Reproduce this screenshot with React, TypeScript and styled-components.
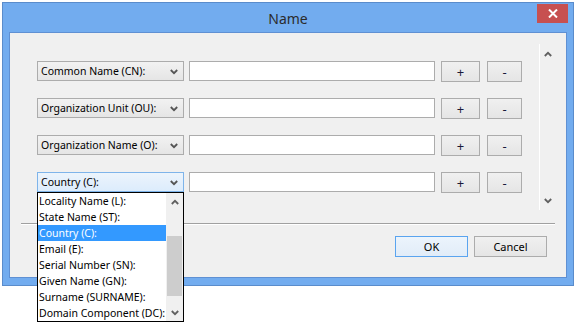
import React from 'react'
import styled, { createGlobalStyle } from 'styled-components'

const GlobalStyle = createGlobalStyle`
  html, body {
    margin: 0;
    padding: 0;
    background: #ffffff;
  }
  body {
    font-family: "Noto Sans", "Liberation Sans", sans-serif;
    font-size: 10.5px;
    color: #000;
  }
`

const Desktop = styled.div`
  width: 577px;
  height: 329px;
  overflow: hidden;
  background: #ffffff;
  padding: 2px 0 0 2px;
  box-sizing: border-box;
`

const Window = styled.div`
  width: 572px;
  height: 284px;
  box-sizing: border-box;
  border: 1px solid #5a8ccb;
  background: #72acef;
  padding: 0 6px 7px 6px;
  display: flex;
  flex-direction: column;
`

const TitleBar = styled.div`
  position: relative;
  height: 29px;
  display: flex;
  align-items: center;
  justify-content: center;
`

const Title = styled.span`
  font-size: 14px;
  color: #2b2b2b;
  padding-top: 1px;
`

const CloseButton = styled.div`
  position: absolute;
  right: -1px;
  top: 1px;
  width: 31px;
  height: 19px;
  background: #c75050;
  display: flex;
  align-items: center;
  justify-content: center;
`

const Client = styled.div`
  flex: 1;
  background: #f0f0f0;
  border: 1px solid #5f90d3;
  display: flex;
  flex-direction: column;
`

const ScrollPane = styled.div`
  margin: 11px 10px 0 0;
  height: 166px;
  display: flex;
`

const Rows = styled.div`
  flex: 1;
  padding: 17px 0 0 27px;
  display: flex;
  flex-direction: column;
  gap: 17px;
`

const Row = styled.div`
  position: relative;
  display: flex;
  align-items: flex-start;
  height: 20px;
`

const Combo = styled.div<{ $open?: boolean }>`
  position: relative;
  width: 147px;
  height: 20px;
  box-sizing: border-box;
  border: 1px solid ${p => (p.$open ? '#7eb4ea' : '#acacac')};
  background: ${p =>
    p.$open
      ? 'linear-gradient(#ecf4fc, #dcecfc)'
      : 'linear-gradient(#f2f2f2, #e5e5e5)'};
  display: flex;
  align-items: center;
  padding-left: 3px;
  white-space: nowrap;
`

const ComboLabel = styled.span`
  flex: 1;
`

const ComboArrow = styled.span`
  width: 18px;
  display: flex;
  justify-content: center;
  padding-top: 2px;
`

const TextInput = styled.div`
  margin-left: 5px;
  width: 246px;
  height: 20px;
  box-sizing: border-box;
  border: 1px solid #acacac;
  background: #ffffff;
`

const SmallButton = styled.div<{ $w: number; $gap: number }>`
  margin-left: ${p => p.$gap}px;
  width: ${p => p.$w}px;
  height: 21px;
  box-sizing: border-box;
  border: 1px solid #acacac;
  background: linear-gradient(#f0f0f0, #e5e5e5);
  display: flex;
  align-items: center;
  justify-content: center;
  font-size: 13px;
  color: #1a1a3a;
`

const ScrollColumn = styled.div`
  width: 17px;
  border-left: 1px solid #ffffff;
  display: flex;
  flex-direction: column;
  justify-content: space-between;
  align-items: center;
  padding: 7px 0 6px 0;
  box-sizing: border-box;
`

const Separator = styled.div`
  margin: 13px 11px 0 11px;
  height: 1px;
  background: #a0a0a0;
  border-bottom: 1px solid #ffffff;
`

const Footer = styled.div`
  display: flex;
  justify-content: flex-end;
  gap: 6px;
  padding: 11px 19px 0 0;
`

const DialogButton = styled.div<{ $default?: boolean }>`
  width: 73px;
  height: 21px;
  box-sizing: border-box;
  border: 1px solid ${p => (p.$default ? '#5aa4ef' : '#acacac')};
  background: ${p =>
    p.$default ? 'linear-gradient(#ecf4fc, #e1ecf8)' : 'linear-gradient(#f0f0f0, #e5e5e5)'};
  display: flex;
  align-items: center;
  justify-content: center;
  font-size: 11px;
`

// the open combo's popup list, hanging below the combo over the dialog edge
const DropList = styled.div`
  position: absolute;
  left: -1px;
  top: 19px;
  width: 147px;
  height: 130px;
  box-sizing: border-box;
  border: 1px solid #000000;
  background: #ffffff;
  display: flex;
  z-index: 10;
`

const ListItems = styled.div`
  flex: 1;
  display: flex;
  flex-direction: column;
`

const ListItem = styled.div<{ $selected?: boolean }>`
  height: 16px;
  line-height: 16px;
  padding-left: 1px;
  white-space: nowrap;
  overflow: hidden;
  background: ${p => (p.$selected ? '#3399ff' : 'transparent')};
  color: ${p => (p.$selected ? '#ffffff' : '#000000')};
`

const ListScroll = styled.div`
  width: 17px;
  background: #f0f0f0;
  display: flex;
  flex-direction: column;
  align-items: center;
`

const ArrowCell = styled.div`
  height: 17px;
  display: flex;
  align-items: center;
  justify-content: center;
`

const ThumbTrack = styled.div`
  flex: 1;
  width: 100%;
  padding: 26px 1px 8px 1px;
  box-sizing: border-box;
`

const Thumb = styled.div`
  height: 100%;
  background: #cdcdcd;
`

const Chevron = ({ up, color = '#606060' }: { up?: boolean; color?: string }) => (
  <svg width="8" height="6" viewBox="0 0 8 6">
    <path
      d={up ? 'M0.8 5 L4 1.8 L7.2 5' : 'M0.8 1 L4 4.2 L7.2 1'}
      fill="none"
      stroke={color}
      strokeWidth="1.8"
    />
  </svg>
)

const fields = [
  'Common Name (CN):',
  'Organization Unit (OU):',
  'Organization Name (O):',
  'Country (C):'
]

const options = [
  'Locality Name (L):',
  'State Name (ST):',
  'Country (C):',
  'Email (E):',
  'Serial Number (SN):',
  'Given Name (GN):',
  'Surname (SURNAME):',
  'Domain Component (DC):'
]

export default function App() {
  return (
    <>
      <GlobalStyle />
      <Desktop>
        <Window>
          <TitleBar>
            <Title>Name</Title>
            <CloseButton>
              <svg width="10" height="9" viewBox="0 0 10 9">
                <path d="M1 0.5 L9 8.5 M9 0.5 L1 8.5" stroke="#ffffff" strokeWidth="2" />
              </svg>
            </CloseButton>
          </TitleBar>
          <Client>
            <ScrollPane>
              <Rows>
                {fields.map((f, i) => {
                  const open = i === fields.length - 1
                  return (
                    <Row key={f}>
                      <Combo $open={open}>
                        <ComboLabel>{f}</ComboLabel>
                        <ComboArrow>
                          <Chevron color="#555" />
                        </ComboArrow>
                        {open && (
                          <DropList>
                            <ListItems>
                              {options.map(o => (
                                <ListItem key={o} $selected={o === f}>
                                  {o}
                                </ListItem>
                              ))}
                            </ListItems>
                            <ListScroll>
                              <ArrowCell>
                                <Chevron up />
                              </ArrowCell>
                              <ThumbTrack>
                                <Thumb />
                              </ThumbTrack>
                              <ArrowCell>
                                <Chevron />
                              </ArrowCell>
                            </ListScroll>
                          </DropList>
                        )}
                      </Combo>
                      <TextInput />
                      <SmallButton $w={39} $gap={6}>+</SmallButton>
                      <SmallButton $w={35} $gap={7}>-</SmallButton>
                    </Row>
                  )
                })}
              </Rows>
              <ScrollColumn>
                <Chevron up />
                <Chevron />
              </ScrollColumn>
            </ScrollPane>
            <Separator />
            <Footer>
              <DialogButton $default>OK</DialogButton>
              <DialogButton>Cancel</DialogButton>
            </Footer>
          </Client>
        </Window>
      </Desktop>
    </>
  )
}
